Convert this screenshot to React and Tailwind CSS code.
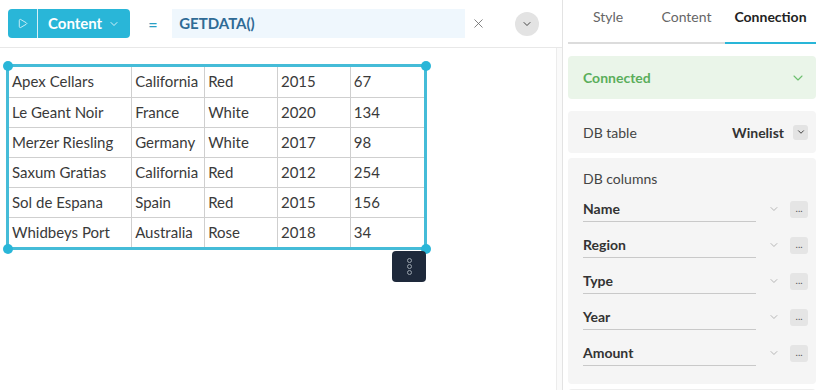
import { ChevronDown, X, Play } from 'lucide-react';

const rows = [
  ['Apex Cellars', 'California', 'Red', '2015', '67'],
  ['Le Geant Noir', 'France', 'White', '2020', '134'],
  ['Merzer Riesling', 'Germany', 'White', '2017', '98'],
  ['Saxum Gratias', 'California', 'Red', '2012', '254'],
  ['Sol de Espana', 'Spain', 'Red', '2015', '156'],
  ['Whidbeys Port', 'Australia', 'Rose', '2018', '34'],
];

const colWidths = ['w-[123px]', 'w-[73px]', 'w-[73px]', 'w-[73px]', 'w-[74px]'];

const dbColumns = ['Name', 'Region', 'Type', 'Year', 'Amount'];

function Dot({ className }) {
  return <span className={`absolute w-[10px] h-[10px] rounded-full bg-[#29b6d8] ${className}`} />;
}

export default function App() {
  return (
    <div className="w-[820px] h-[390px] overflow-hidden bg-white flex font-['Lato',sans-serif] text-[#333]">
      {/* Editor area */}
      <div className="flex-1 flex flex-col">
        <div className="h-[48px] border-b border-[#e8e8e8] flex items-center pl-2 pr-3 shrink-0">
          <div className="flex h-[29px] rounded-[4px] bg-[#29b6d8] text-white">
            <div className="w-[30px] flex items-center justify-center border-r border-white/80">
              <Play size={11} strokeWidth={1.6} />
            </div>
            <div className="flex items-center gap-1.5 px-[10px] text-[15px] font-bold">
              Content
              <ChevronDown size={12} strokeWidth={1.6} />
            </div>
          </div>
          <span className="ml-[18px] w-[12px] text-[16px] font-bold text-[#2a9fc4]">=</span>
          <div className="ml-[12px] h-[29px] w-[293px] bg-[#eff7fd] flex items-center px-[7px] text-[15px] font-bold text-[#2f6b96]">
            GETDATA()
          </div>
          <X size={15} strokeWidth={1.3} className="ml-[6px] text-[#666]" />
          <div className="ml-[29px] w-[24px] h-[24px] rounded-full bg-[#e3e3e3] flex items-center justify-center text-[#333]">
            <ChevronDown size={12} strokeWidth={1.8} />
          </div>
        </div>
        <div className="flex-1 flex">
          <div className="flex-1 pt-[16px] pl-[6px]">
            <div className="relative w-[421px] border-[3px] border-[#45bcd8] rounded-[2px]">
              <Dot className="-left-[6.5px] -top-[6.5px]" />
              <Dot className="-right-[6.5px] -top-[6.5px]" />
              <Dot className="-left-[6.5px] -bottom-[6.5px]" />
              <Dot className="-right-[6.5px] -bottom-[6.5px]" />
              <table className="border-collapse text-[15px] text-[#3a3a3a]">
                <tbody>
                  {rows.map((r, i) => (
                    <tr key={i} className="h-[30px]">
                      {r.map((c, j) => (
                        <td key={j} className={`${colWidths[j]} border border-[#cfcfcf] px-[3px] leading-none first:border-l-0 last:border-r-0 ${i === 0 ? 'border-t-0' : ''} ${i === rows.length - 1 ? 'border-b-0' : ''}`}>
                          {c}
                        </td>
                      ))}
                    </tr>
                  ))}
                </tbody>
              </table>
              <div className="absolute right-[-2px] top-[calc(100%+4px)] w-[34px] h-[31px] rounded-[4px] bg-[#1e293b] flex flex-col items-center justify-center gap-[1px]">
                <span className="w-[5px] h-[5px] rounded-full border border-[#9aa3ad]" />
                <span className="w-[5px] h-[5px] rounded-full border border-[#9aa3ad]" />
                <span className="w-[5px] h-[5px] rounded-full border border-[#9aa3ad]" />
              </div>
            </div>
          </div>
          <div className="w-[6px] border-l border-[#ececec] bg-[#fafafa]" />
        </div>
      </div>

      {/* Properties panel */}
      <div className="w-[258px] border-l border-[#e3e3e3] flex flex-col pl-[5px] pr-[4px] shrink-0">
        <div className="flex shrink-0 h-[44px] border-b-2 border-[#dcdcdc] text-[14px]">
          <div className="w-[80px] flex justify-center pt-[6px] text-[#666]">Style</div>
          <div className="w-[77px] flex justify-center pt-[6px] text-[#666]">Content</div>
          <div className="flex-1 flex justify-center pt-[6px] font-bold text-[#222] border-b-2 border-[#29b6d8] -mb-[2px]">Connection</div>
        </div>
        <div className="mt-[12px] shrink-0 h-[43px] rounded-[4px] bg-[#eaf5e9] flex items-center justify-between pl-[15px] pr-[10px]">
          <span className="text-[14px] font-bold text-[#5aae5b]">Connected</span>
          <ChevronDown size={16} strokeWidth={1.6} className="text-[#6cbf6e]" />
        </div>
        <div className="mt-[12px] shrink-0 h-[42px] rounded-[4px] bg-[#f5f5f5] flex items-center justify-between pl-[15px] pr-[8px] text-[14px]">
          <span className="text-[#444]">DB table</span>
          <div className="flex items-center gap-[9px]">
            <span className="font-bold text-[#333]">Winelist</span>
            <span className="w-[15px] h-[15px] rounded-[3px] bg-[#e3e3e3] flex items-center justify-center">
              <ChevronDown size={10} strokeWidth={2.2} />
            </span>
          </div>
        </div>
        <div className="mt-[5px] shrink-0 h-[226px] rounded-[4px] bg-[#f5f5f5] pl-[15px] pr-[8px] pt-[11px]">
          <div className="text-[14px] text-[#444] leading-[20px]">DB columns</div>
          <div className="mt-[2px] flex flex-col">
            {dbColumns.map((c) => (
              <div key={c} className="h-[36px] flex items-center">
                <div className="w-[175px] h-[26px] border-b border-[#c9c9c9] flex items-end pb-[2px] text-[14px] font-bold text-[#333]">
                  {c}
                </div>
                <ChevronDown size={12} strokeWidth={1.4} className="ml-[12px] text-[#999]" />
                <span className="ml-[10px] w-[18px] h-[17px] rounded-[3px] bg-[#e5e5e5] flex items-center justify-center text-[10px] leading-none text-[#555] pb-[3px]">
                  ...
                </span>
              </div>
            ))}
          </div>
        </div>
        <div className="mt-[5px] shrink-0 h-[20px] rounded-t-[4px] border-t border-[#eeeeee]" />
      </div>
    </div>
  );
}
